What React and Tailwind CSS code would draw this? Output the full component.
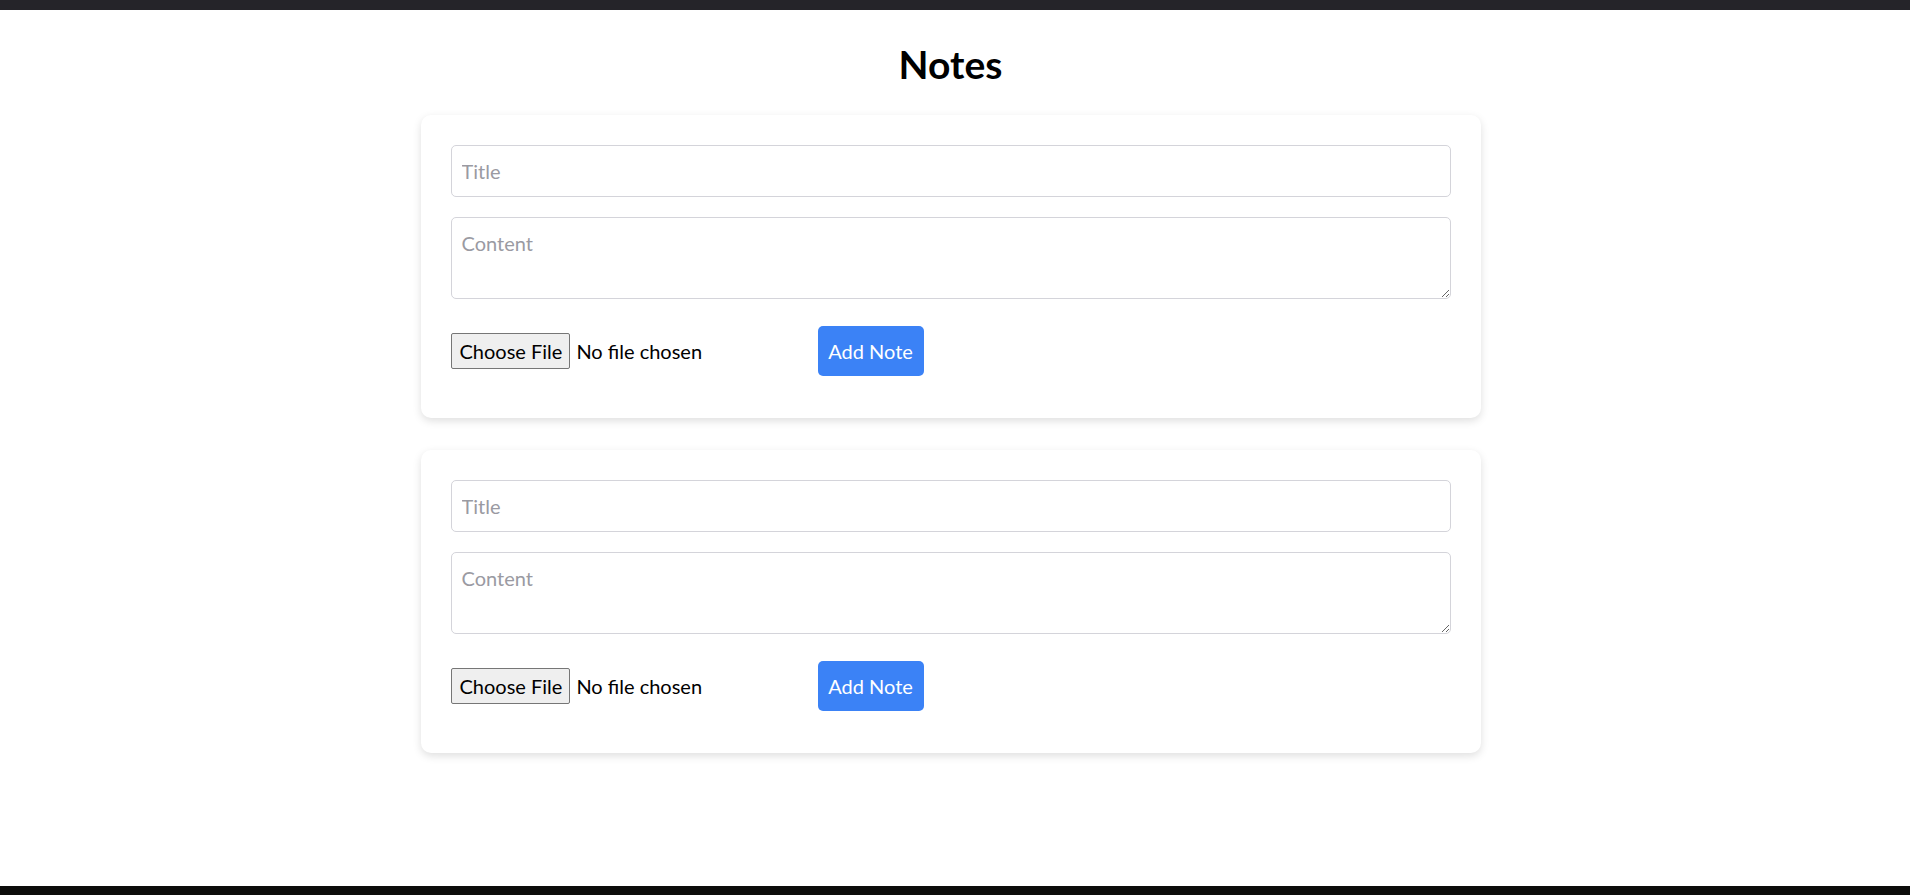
import { useState } from 'react'

function NoteForm() {
  const [title, setTitle] = useState('')
  const [content, setContent] = useState('')

  return (
    <form
      onSubmit={(e) => e.preventDefault()}
      className="bg-white rounded-[10px] shadow-[0_3px_9px_rgba(0,0,0,0.13)] px-[30px] pt-[30px] pb-[42px]"
    >
      <input
        type="text"
        value={title}
        onChange={(e) => setTitle(e.target.value)}
        placeholder="Title"
        className="block w-full h-[52px] px-[10px] border border-[#d4d4da] rounded-[5px] text-[20px] leading-[24px] outline-none placeholder:text-[#9a9aa2]"
      />
      <textarea
        value={content}
        onChange={(e) => setContent(e.target.value)}
        placeholder="Content"
        className="block w-full h-[82px] mt-[20px] px-[10px] pt-[13px] border border-[#d4d4da] rounded-[5px] text-[20px] leading-[24px] outline-none placeholder:text-[#9a9aa2]"
      />
      <div className="flex items-center gap-3 mt-[27px]">
        <input
          type="file"
          className="w-[355px] text-[20px] leading-[24px] text-black file:bg-[#efefef] file:border file:border-[#767676] file:rounded-[2px] file:pl-[8px] file:pr-[7px] file:py-[5px] file:mr-[6px] file:text-black"
        />
        <button
          type="submit"
          className="w-[106px] h-[50px] bg-[#3b82f6] text-white text-[20px] rounded-[5px]"
        >
          Add Note
        </button>
      </div>
    </form>
  )
}

export default function App() {
  return (
    <div className="min-h-screen flex flex-col bg-white text-black font-['Lato',sans-serif]">
      <div className="h-[10px] bg-[#252429]" />

      <main className="flex-1 pr-[9px]">
        <div className="w-[1060px] mx-auto">
          <h1 className="text-center text-[39px] leading-[46px] font-bold mt-[31px] mb-[28px]">Notes</h1>
          <div className="flex flex-col gap-[32px]">
            <NoteForm />
            <NoteForm />
          </div>
        </div>
      </main>

      <div className="h-[9px] bg-[#0d0d0b]" />
    </div>
  )
}
